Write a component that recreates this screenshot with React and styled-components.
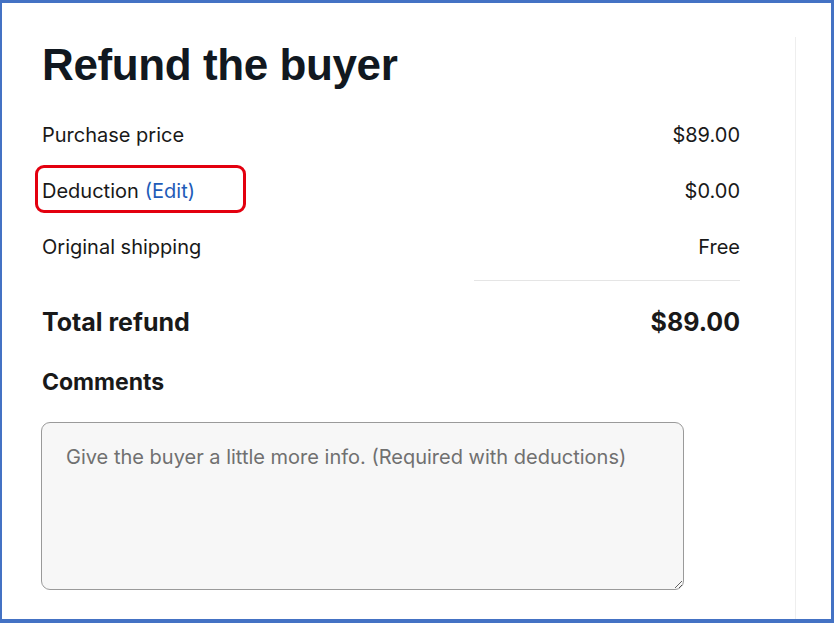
import React from 'react';
import styled, { createGlobalStyle } from 'styled-components';

const GlobalStyle = createGlobalStyle`
  html, body {
    margin: 0;
    padding: 0;
    background: #fff;
  }
  body {
    font-family: Inter, "Liberation Sans", sans-serif;
    color: #191919;
  }
`;

const Frame = styled.div`
  box-sizing: border-box;
  width: 834px;
  height: 623px;
  border: 3px solid #4472c4;
  border-left-width: 2px;
  border-bottom-width: 4px;
  overflow: hidden;
  display: flex;
`;

const Panel = styled.div`
  position: relative;
  box-sizing: border-box;
  width: 794px;
  margin-top: 34px;
  padding: 0 55px 0 40px;
  border-right: 1px solid #eeeeee;
`;

const Heading = styled.h1`
  margin: 0 0 14px;
  font-family: "Liberation Sans", Arial, sans-serif;
  font-size: 44px;
  font-weight: 700;
  line-height: 56px;
  color: #111820;
  letter-spacing: -0.4px;
`;

const Row = styled.div`
  display: flex;
  justify-content: space-between;
  align-items: center;
  height: ${(p) => p.$h || 56}px;
  font-size: ${(p) => (p.$total ? 25 : 20)}px;
  font-weight: ${(p) => (p.$total ? 700 : 400)};
`;

const Edit = styled.a`
  color: #1e5bb8;
  text-decoration: none;
  margin-left: 6px;
`;

const Divider = styled.hr`
  margin: 5px 0 0 432px;
  border: 0;
  border-top: 1px solid #e5e5e5;
`;

const Label = styled.div`
  margin: 7px 0 27px;
  font-size: 23px;
  line-height: 25px;
  font-weight: 700;
`;

const Comment = styled.textarea`
  display: block;
  box-sizing: border-box;
  width: 643px;
  height: 168px;
  margin-left: -1px;
  padding: 22px 24px;
  border: 1px solid #9a9a9a;
  border-radius: 9px;
  background: #f7f7f7;
  font-family: Inter, "Liberation Sans", sans-serif;
  font-size: 20px;
  resize: vertical;
  &::placeholder {
    color: #707070;
  }
`;

const Highlight = styled.div`
  position: absolute;
  left: 33px;
  top: 128px;
  width: 205px;
  height: 42px;
  border: 3px solid #e3000f;
  border-radius: 9px;
  pointer-events: none;
`;

export default function App() {
  return (
    <>
      <GlobalStyle />
      <Frame>
        <Panel>
          <Heading>Refund the buyer</Heading>
          <Row>
            <span>Purchase price</span>
            <span>$89.00</span>
          </Row>
          <Row>
            <span>
              Deduction<Edit href="#">(Edit)</Edit>
            </span>
            <span>$0.00</span>
          </Row>
          <Row>
            <span>Original shipping</span>
            <span>Free</span>
          </Row>
          <Divider />
          <Row $total $h={82}>
            <span>Total refund</span>
            <span>$89.00</span>
          </Row>
          <Label>Comments</Label>
          <Comment placeholder="Give the buyer a little more info. (Required with deductions)" />
          <Highlight />
        </Panel>
      </Frame>
    </>
  );
}
